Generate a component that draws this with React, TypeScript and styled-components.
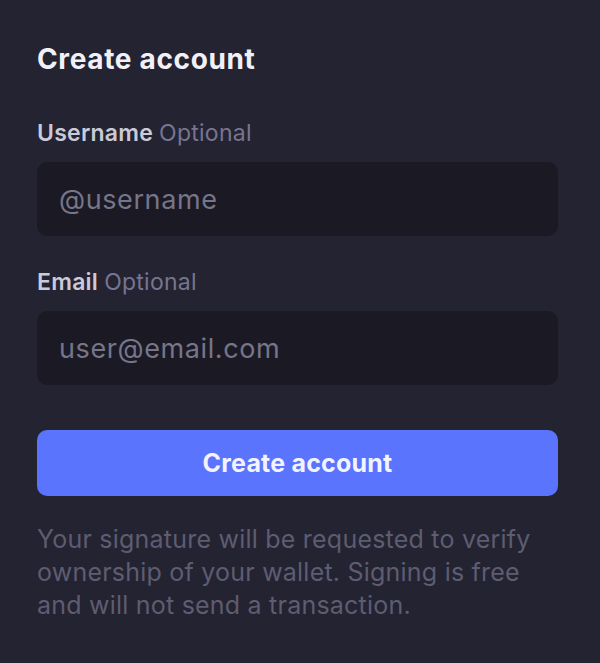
import React from "react";
import styled, { createGlobalStyle } from "styled-components";

const Global = createGlobalStyle`
  html, body { margin: 0; padding: 0; background: #242331; }
  body { font-family: Inter, "Noto Sans", sans-serif; -webkit-font-smoothing: antialiased; }
  * { box-sizing: border-box; }
`;

const Page = styled.div`
  width: 600px;
  height: 663px;
  background: #242331;
  padding: 41px 42px 0 37px;
  display: flex;
  flex-direction: column;
`;

const Title = styled.h1`
  margin: 0;
  font-size: 28px;
  line-height: 36px;
  font-weight: 700;
  color: #f1f0f6;
  letter-spacing: 0.65px;
`;

const Field = styled.div<{ $top: number }>`
  display: flex;
  flex-direction: column;
  margin-top: ${(p) => p.$top}px;
`;

const Label = styled.label`
  font-size: 23px;
  line-height: 30px;
  font-weight: 600;
  color: #cbcad8;
  letter-spacing: 0.25px;
`;

const Optional = styled.span`
  font-weight: 400;
  color: #777590;
  margin-left: 6px;
`;

const Input = styled.input`
  margin-top: 14px;
  height: 74px;
  border: none;
  outline: none;
  border-radius: 10px;
  background: #1b1a24;
  padding: 0 22px;
  font-family: Inter, "Noto Sans", sans-serif;
  font-size: 27px;
  letter-spacing: 0.6px;
  color: #e0e0ea;
  &::placeholder { color: #76758a; }
`;

const Button = styled.button`
  margin-top: 45px;
  height: 66px;
  border: none;
  border-radius: 10px;
  background: #5a74fd;
  color: #f2f3ff;
  font-family: Inter, "Noto Sans", sans-serif;
  font-size: 25px;
  font-weight: 700;
  letter-spacing: 0.2px;
  cursor: pointer;
`;

const Note = styled.p`
  margin: 27px 0 0;
  font-size: 25px;
  line-height: 33px;
  color: #5e5c71;
  letter-spacing: 0.22px;
`;

export default function App() {
  return (
    <>
      <Global />
      <Page>
        <Title>Create account</Title>
        <Field $top={41}>
          <Label>
            Username<Optional>Optional</Optional>
          </Label>
          <Input placeholder="@username" />
        </Field>
        <Field $top={31}>
          <Label>
            Email<Optional>Optional</Optional>
          </Label>
          <Input placeholder="user@email.com" />
        </Field>
        <Button>Create account</Button>
        <Note>
          Your signature will be requested to verify ownership of your wallet.
          Signing is free and will not send a transaction.
        </Note>
      </Page>
    </>
  );
}
